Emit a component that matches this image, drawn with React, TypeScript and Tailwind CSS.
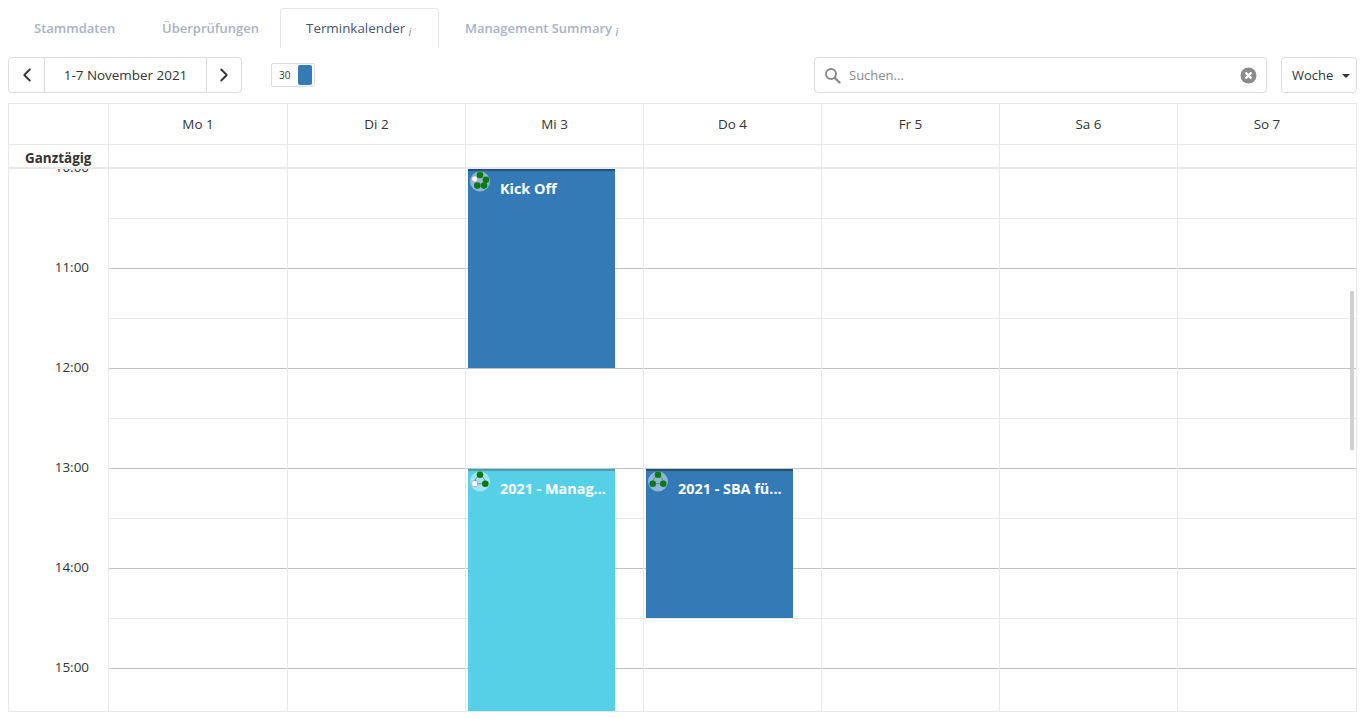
import { ChevronLeft, ChevronRight } from "lucide-react";

const tage = ["Mo 1", "Di 2", "Mi 3", "Do 4", "Fr 5", "Sa 6", "So 7"];
const stunden = ["11:00", "12:00", "13:00", "14:00", "15:00"];
// column widths of the week grid
const breiten = ["w-[179px]", "w-[178px]", "w-[178px]", "w-[178px]", "w-[178px]", "w-[178px]", "w-[179px]"];

const gruen = "#0a7a0a";

const termine: Record<number, { titel: string; top: string; hoehe: string; farbe: string; kante: string; art: "fuenf" | "drei" | "dreiWeiss" }[]> = {
  2: [
    { titel: "Kick Off", top: "top-0", hoehe: "h-[199px]", farbe: "bg-[#337ab7]", kante: "border-t-[#23527c]", art: "fuenf" },
    { titel: "2021 - Manag...", top: "top-[300px]", hoehe: "h-[250px]", farbe: "bg-[#56d0e7]", kante: "border-t-[#4a9fae]", art: "dreiWeiss" },
  ],
  3: [
    { titel: "2021 - SBA fü...", top: "top-[300px]", hoehe: "h-[149px]", farbe: "bg-[#337ab7]", kante: "border-t-[#23527c]", art: "drei" },
  ],
};

function Status({ art }: { art: "fuenf" | "drei" | "dreiWeiss" }) {
  return (
    <svg width="20" height="21" viewBox="0 0 20 21" className="absolute left-[2px] top-0">
      <circle cx="10" cy="10.5" r="10" fill="#fff" fillOpacity="0.45" />
      {art === "fuenf" ? (
        <>
          <circle cx="4.7" cy="8" r="3" fill="#fff" stroke="#777" strokeWidth="0.4" />
          <circle cx="10" cy="4" r="3.3" fill={gruen} />
          <circle cx="16" cy="8.7" r="3.3" fill={gruen} />
          <circle cx="7.3" cy="14.6" r="3.3" fill={gruen} />
          <circle cx="14" cy="14.6" r="3.3" fill={gruen} />
        </>
      ) : (
        <>
          <path d="M4.7 12.7C5 8 7 5 10 3.7C13 5 15 8 15.3 12.7Z" fill="none" stroke="#555" strokeWidth="0.6" />
          <circle cx="10" cy="3.7" r="3.3" fill={gruen} />
          <circle cx="15.3" cy="12.7" r="3.3" fill={gruen} />
          {art === "drei" ? (
            <circle cx="4.7" cy="12.7" r="3.3" fill={gruen} />
          ) : (
            <rect x="2" y="10" width="5.4" height="5.4" fill="#fff" stroke="#777" strokeWidth="0.4" />
          )}
        </>
      )}
    </svg>
  );
}

function Info() {
  return <i className="inline-block translate-y-[3px] font-normal text-[11px] text-[#7f8ea6]">i</i>;
}

export default function App() {
  return (
    <div className="w-[1366px] h-[719px] overflow-hidden bg-white text-[#333] font-['Open_Sans',sans-serif]">
      {/* Reiter */}
      <div className="h-[48px] pt-2 pl-2 flex text-[13px] leading-[20px] font-semibold text-[#a9b2c3]">
        <div className="w-[136px] pl-[26px] pt-[10px]">Stammdaten</div>
        <div className="w-[136px] pl-[18px] pt-[10px]">Überprüfungen</div>
        <div className="w-[159px] h-[40px] pl-[25px] pt-[9px] border border-b-0 border-[#e4e4e4] rounded-t font-medium text-[13.4px] text-[#4a5568]">
          Terminkalender <Info />
        </div>
        <div className="pl-[26px] pt-[10px]">
          Management Summary <Info />
        </div>
      </div>

      {/* Werkzeugleiste */}
      <div className="h-[55px] pt-[9px] pl-2 pr-[9px] flex items-start">
        <div className="flex h-[36px] w-[234px] border border-[#dcdcdc] rounded text-[13.44px]">
          <div className="w-[36px] flex items-center justify-center border-r border-[#dcdcdc]">
            <ChevronLeft size={22} strokeWidth={2} />
          </div>
          <div className="w-[162px] flex items-center justify-center border-r border-[#dcdcdc]">1-7 November 2021</div>
          <div className="flex-1 flex items-center justify-center">
            <ChevronRight size={22} strokeWidth={2} />
          </div>
        </div>
        <div className="ml-[29px] mt-[6px] w-[44px] h-[24px] border border-[#dcdcdc] rounded-[2px] flex items-center justify-between pl-[7px] pr-[2px] text-[10px]">
          30
          <span className="w-[14px] h-[20px] bg-[#337ab7] rounded-[2px]" />
        </div>
        <div className="ml-[499px] w-[453px] h-[36px] border border-[#dcdcdc] rounded flex items-center pl-[9px] pr-[9px] text-[13px] text-[#8a8a8a]">
          <svg width="17" height="17" viewBox="0 0 17 17" fill="none" stroke="#8a8a8a" strokeWidth="2">
            <circle cx="7" cy="7" r="5" />
            <path d="M10.8 10.8L15.5 15.5" strokeLinecap="round" strokeWidth="2.4" />
          </svg>
          <span className="ml-[8px] flex-1 pt-[2px]">Suchen...</span>
          <svg width="17" height="17" viewBox="0 0 17 17">
            <circle cx="8.5" cy="8.5" r="8" fill="#8a8a8a" />
            <path d="M5.5 5.5L11.5 11.5M11.5 5.5L5.5 11.5" stroke="#fff" strokeWidth="2.4" />
          </svg>
        </div>
        <div className="ml-[14px] w-[76px] h-[36px] border border-[#dcdcdc] rounded flex items-center pl-[10px] pt-[2px] text-[13px]">
          Woche
          <span className="ml-[9px] border-x-[4px] border-x-transparent border-t-[4px] border-t-[#333]" />
        </div>
      </div>

      {/* Wochenraster */}
      <div className="relative ml-2 w-[1349px] h-[609px] border border-[#e8e8e8] overflow-hidden">
        <div className="flex h-[41px] border-b border-[#e8e8e8] text-[13.44px]">
          <div className="w-[99px]" />
          {tage.map((tag, i) => (
            <div key={tag} className={`${breiten[i]} border-l border-[#e8e8e8] flex items-center justify-center`}>
              {tag}
            </div>
          ))}
        </div>
        <div className="flex h-[24px] border-b-2 border-[#e8e8e8]">
          <div className="w-[99px] pl-[16px] pt-[4px] text-[13.44px] leading-[18px] font-bold">Ganztägig</div>
          {tage.map((tag, i) => (
            <div key={tag} className={`${breiten[i]} border-l border-[#e8e8e8]`} />
          ))}
        </div>
        <div className="flex h-[543px] overflow-hidden">
          <div className="w-[99px] text-[13.44px] text-right pr-[19px]">
            <div className="h-[100px] -mt-[11px] leading-[18px]">10:00</div>
            {stunden.map((s) => (
              <div key={s} className="h-[100px] leading-[18px]">{s}</div>
            ))}
          </div>
          {tage.map((tag, i) => (
            <div key={tag} className={`relative ${breiten[i]} border-l border-[#e8e8e8]`}>
              {Array.from({ length: 6 }).map((_, r) => (
                <div key={r}>
                  <div className="h-[50px] border-b border-[#e8e8e8]" />
                  <div className="h-[50px] border-b border-[#c2c2c2]" />
                </div>
              ))}
              {(termine[i] || []).map((t) => (
                <div key={t.titel} className={`absolute left-[2px] w-[147px] ${t.top} ${t.hoehe} ${t.farbe} border-t-2 ${t.kante} text-white`}>
                  <Status art={t.art} />
                  <div className="pl-[32px] pt-[8px] text-[14.4px] leading-[20px] font-bold whitespace-nowrap">{t.titel}</div>
                </div>
              ))}
            </div>
          ))}
        </div>
        <div className="absolute left-[1341px] top-[187px] w-[4px] h-[159px] bg-[#d0d0d0]" />
      </div>
    </div>
  );
}
